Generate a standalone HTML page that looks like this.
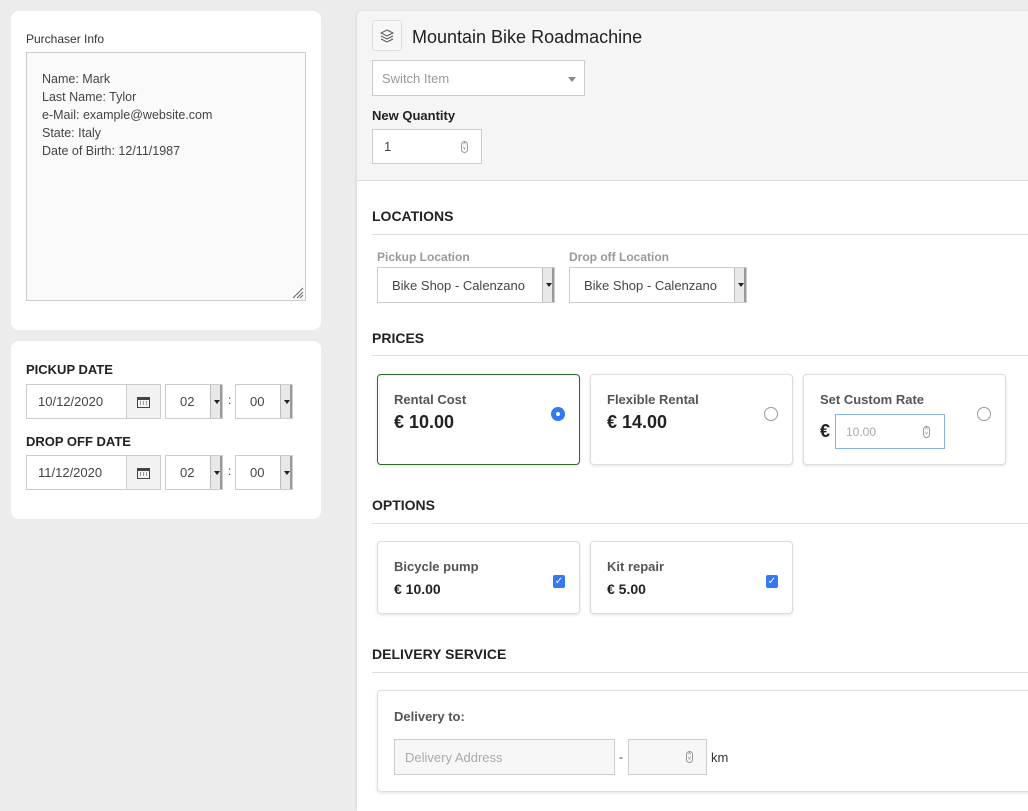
<!DOCTYPE html>
<html><head><meta charset="utf-8"><style>
*{box-sizing:border-box;margin:0;padding:0}
body{width:1028px;height:795px;background:#ececec;font-family:"Liberation Sans",Arial,sans-serif;color:#333;position:relative;overflow:hidden;font-size:13px}
.a{position:absolute}
.card{background:#fff;border-radius:8px}
.inp{position:absolute;background:#fff;border:1px solid #ccc;font-size:13px;color:#444;line-height:normal;display:flex;align-items:center}
.h{font-weight:bold;font-size:13px;color:#222}
.sec{position:absolute;left:372px;font-weight:bold;font-size:14px;color:#222}
.line{position:absolute;left:372px;right:0;height:1px;background:#ddd}
.arr{position:absolute;right:0;top:0;bottom:0;width:12px;background:#e8e8e8;border-left:1px solid #bbb;border-right:2px solid #999}
.arr:after{content:"";position:absolute;left:3px;top:50%;margin-top:-2px;border-left:3px solid transparent;border-right:3px solid transparent;border-top:4px solid #222}
.box{position:absolute;background:#fff;border:1px solid #ddd;border-radius:4px;box-shadow:0 1px 3px rgba(0,0,0,.12)}
.lbl{position:absolute;left:16px;top:17px;font-weight:bold;font-size:13px;color:#555}
.pr{position:absolute;left:16px;top:37px;font-weight:bold;font-size:18px;color:#222}
.radio{position:absolute;width:14px;height:14px;border-radius:50%;border:1px solid #999;background:#fff}
.chk{position:absolute;width:12px;height:13px;border-radius:2px;background:#3478f6;color:#fff;font-size:10px;text-align:center;line-height:13px}
.spin{position:absolute;width:7px;height:12px;border:1px solid #999;border-radius:4px;font-size:5px;line-height:5px;text-align:center;color:#555}
</style></head><body>
<div class="card a" style="left:11px;top:11px;width:310px;height:319px"></div>
<div class="a" style="left:26px;top:32px;font-size:12px;color:#333">Purchaser Info</div>
<div class="a" style="left:26px;top:52px;width:280px;height:249px;background:#fafafa;border:1px solid #ccc;padding:17px 15px;font-size:12.5px;line-height:18px;color:#444">Name: Mark<br>Last Name: Tylor<br>e-Mail: example@website.com<br>State: Italy<br>Date of Birth: 12/11/1987
<svg class="a" style="right:1px;bottom:1px" width="14" height="14"><path d="M13 3L3 13M13 7L7 13M13 10L10 13" stroke="#666" stroke-width="1"/></svg></div>

<div class="card a" style="left:11px;top:341px;width:310px;height:178px"></div>
<div class="a h" style="left:26px;top:362px">PICKUP DATE</div>
<div class="a h" style="left:26px;top:434px">DROP OFF DATE</div>
<div class="inp" style="left:26px;top:384px;width:135px;height:35px;padding-left:11px">10/12/2020<div class="a" style="left:99px;top:0;bottom:0;right:0;background:#f2f2f2;border-left:1px solid #ccc;display:flex;align-items:center;justify-content:center"><svg width="13" height="12"><rect x="0.5" y="1.5" width="12" height="10" fill="none" stroke="#444"/><rect x="0.5" y="1.5" width="12" height="2.5" fill="#444"/><path d="M3 6h1M6 6h1M9 6h1M3 8h1M6 8h1M9 8h1" stroke="#444"/></svg></div></div>
<div class="inp" style="left:165px;top:384px;width:58px;height:35px;padding-left:14px">02<div class="arr"></div></div>
<div class="a" style="left:228px;top:393px;font-size:12px">:</div>
<div class="inp" style="left:235px;top:384px;width:58px;height:35px;padding-left:14px">00<div class="arr"></div></div>
<div class="inp" style="left:26px;top:455px;width:135px;height:35px;padding-left:11px">11/12/2020<div class="a" style="left:99px;top:0;bottom:0;right:0;background:#f2f2f2;border-left:1px solid #ccc;display:flex;align-items:center;justify-content:center"><svg width="13" height="12"><rect x="0.5" y="1.5" width="12" height="10" fill="none" stroke="#444"/><rect x="0.5" y="1.5" width="12" height="2.5" fill="#444"/><path d="M3 6h1M6 6h1M9 6h1M3 8h1M6 8h1M9 8h1" stroke="#444"/></svg></div></div>
<div class="inp" style="left:165px;top:455px;width:58px;height:35px;padding-left:14px">02<div class="arr"></div></div>
<div class="a" style="left:228px;top:464px;font-size:12px">:</div>
<div class="inp" style="left:235px;top:455px;width:58px;height:35px;padding-left:14px">00<div class="arr"></div></div>

<!-- main panel -->
<div class="a" style="left:357px;top:11px;width:680px;height:800px;background:#fff;border-top-left-radius:6px;box-shadow:-1px 0 3px rgba(0,0,0,.08)"></div>
<div class="a" style="left:357px;top:11px;width:680px;height:170px;background:#f5f5f5;border-bottom:1px solid #ddd;border-top-left-radius:6px"></div>
<div class="a" style="left:372px;top:20px;width:30px;height:31px;border:1px solid #ddd;border-radius:3px;background:#f7f7f7;display:flex;align-items:center;justify-content:center"><svg width="16" height="16" viewBox="0 0 16 16" fill="none" stroke="#555" stroke-width="1"><path d="M8 2L14 5L8 8L2 5Z"/><path d="M2 8L8 11L14 8"/><path d="M2 11L8 14L14 11"/></svg></div>
<div class="a" style="left:412px;top:27px;font-size:18px;color:#222">Mountain Bike Roadmachine</div>
<div class="inp" style="left:372px;top:60px;width:213px;height:36px;padding-left:9px;color:#999">Switch Item<div class="a" style="right:8px;top:16px;border-left:4px solid transparent;border-right:4px solid transparent;border-top:5px solid #888"></div></div>
<div class="a h" style="left:372px;top:108px">New Quantity</div>
<div class="inp" style="left:372px;top:129px;width:110px;height:35px;padding-left:11px">1<div class="spin" style="left:88px;top:11px">˄<br>˅</div></div>

<div class="sec" style="top:208px">LOCATIONS</div>
<div class="line" style="top:234px"></div>
<div class="a" style="left:377px;top:250px;font-size:12px;font-weight:bold;color:#999">Pickup Location</div>
<div class="a" style="left:569px;top:250px;font-size:12px;font-weight:bold;color:#999">Drop off Location</div>
<div class="inp" style="left:377px;top:267px;width:178px;height:36px;padding-left:14px">Bike Shop - Calenzano<div class="arr"></div></div>
<div class="inp" style="left:569px;top:267px;width:178px;height:36px;padding-left:14px">Bike Shop - Calenzano<div class="arr"></div></div>

<div class="sec" style="top:330px">PRICES</div>
<div class="line" style="top:355px"></div>
<div class="box" style="left:377px;top:374px;width:203px;height:91px;border-color:#2d6a2d"><div class="lbl">Rental Cost</div><div class="pr">€ 10.00</div><div class="radio" style="left:173px;top:32px;background:#3478f6;border-color:#3478f6"><div class="a" style="left:4px;top:4px;width:4px;height:4px;border-radius:50%;background:#fff"></div></div></div>
<div class="box" style="left:590px;top:374px;width:203px;height:91px"><div class="lbl">Flexible Rental</div><div class="pr">€ 14.00</div><div class="radio" style="left:173px;top:32px"></div></div>
<div class="box" style="left:803px;top:374px;width:203px;height:91px"><div class="lbl">Set Custom Rate</div><div class="pr" style="top:46px">€</div><div class="inp" style="left:31px;top:39px;width:110px;height:35px;border-color:#8ab4e0;padding-left:10px;color:#aaa;font-size:12px">10.00<div class="spin" style="left:87px;top:11px">˄<br>˅</div></div><div class="radio" style="left:173px;top:32px"></div></div>

<div class="sec" style="top:497px">OPTIONS</div>
<div class="line" style="top:523px"></div>
<div class="box" style="left:377px;top:541px;width:203px;height:73px"><div class="lbl">Bicycle pump</div><div class="pr" style="top:39px;font-size:14px">€ 10.00</div><div class="chk" style="left:175px;top:33px">✓</div></div>
<div class="box" style="left:590px;top:541px;width:203px;height:73px"><div class="lbl">Kit repair</div><div class="pr" style="top:39px;font-size:14px">€ 5.00</div><div class="chk" style="left:175px;top:33px">✓</div></div>

<div class="sec" style="top:646px">DELIVERY SERVICE</div>
<div class="line" style="top:672px"></div>
<div class="box" style="left:377px;top:690px;width:680px;height:102px"><div class="lbl" style="top:18px">Delivery to:</div></div>
<div class="inp" style="left:394px;top:739px;width:221px;height:36px;padding-left:10px;background:#f7f7f7;color:#aaa">Delivery Address</div>
<div class="a" style="left:619px;top:750px;font-size:12px">-</div>
<div class="inp" style="left:628px;top:739px;width:79px;height:36px;background:#f7f7f7"><div class="spin" style="left:57px;top:11px">˄<br>˅</div></div>
<div class="a" style="left:711px;top:750px;font-size:13px">km</div>
</body></html>
